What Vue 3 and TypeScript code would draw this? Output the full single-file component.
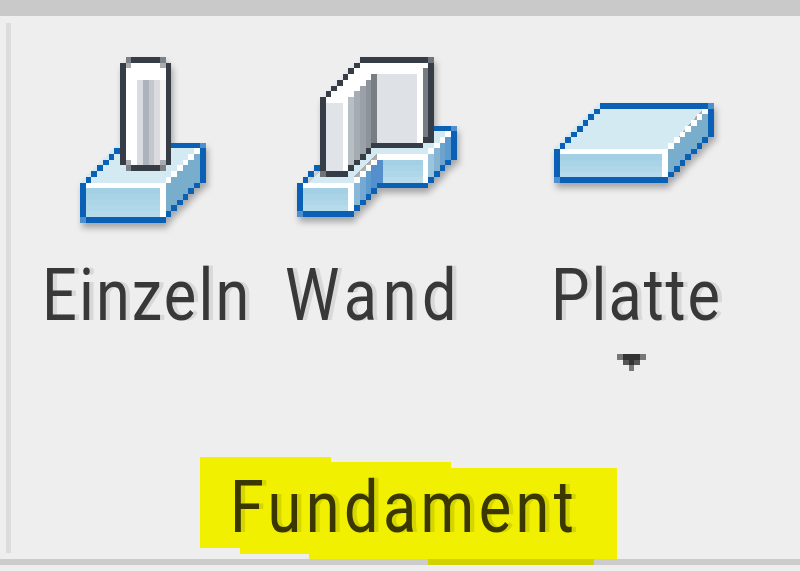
<script setup lang="ts">
interface Cell { x: number; y: number; w: number; h: number; fill: string }
interface Poly { points: string; fill: string }
interface Art { name: string; cols: number; rows: number; polys: Poly[]; cells: Cell[] }

const BLUE = '#0a60b5'
const CORNER = '#4f8fcb'
const DARK = '#373d46'
const TOP = '#d3eaf2'
const SIDE = '#78adcb'
const WHITE = '#ffffff'

const cell = (x: number, y: number, w: number, h: number, fill: string): Cell => ({ x, y, w, h, fill })

// staircase going up and to the right, one cell per step
function stairs(x: number, y: number, n: number, fill: string): Cell[] {
  return Array.from({ length: n }, (_, i) => cell(x + i, y - i, 1, 1, fill))
}

// front face of a slab, light blue getting paler towards the bottom
function front(x: number, y: number, w: number, h: number): Cell[] {
  return Array.from({ length: h }, (_, i) => {
    const t = h > 1 ? i / (h - 1) : 0
    const c = (a: number, b: number) => Math.round(a + (b - a) * t)
    return cell(x, y + i, w, 1, `rgb(${c(163, 182)},${c(208, 219)},${c(229, 235)})`)
  })
}

const einzeln: Art = {
  name: 'Einzeln',
  cols: 22,
  rows: 29,
  polys: [
    { points: '7,15 22,15 15,22 0,22', fill: TOP },
    { points: '15,22 21,16 21,22 15,28', fill: SIDE },
  ],
  cells: [
    ...front(1, 23, 13, 5),
    cell(1, 22, 14, 1, WHITE),
    cell(14, 22, 1, 6, WHITE),
    ...stairs(15, 21, 6, WHITE),
    cell(7, 15, 15, 1, BLUE),
    cell(21, 15, 1, 7, BLUE),
    cell(21, 15, 1, 1, CORNER),
    cell(0, 22, 1, 6, BLUE),
    cell(0, 28, 1, 1, CORNER),
    cell(1, 28, 14, 1, BLUE),
    ...stairs(1, 21, 6, BLUE),
    ...stairs(15, 27, 6, BLUE),
    // column
    cell(8, 1, 7, 18, WHITE),
    cell(10, 4, 1, 15, '#d8dbdf'),
    cell(11, 4, 1, 15, '#adb3ba'),
    cell(12, 4, 1, 15, '#c4c8cd'),
    cell(13, 4, 1, 15, '#d9dbde'),
    cell(14, 4, 1, 15, '#f3f3f4'),
    cell(9, 0, 5, 1, DARK),
    cell(9, 19, 5, 1, DARK),
    cell(7, 1, 1, 18, DARK),
    cell(15, 1, 1, 18, DARK),
    cell(8, 0, 1, 1, '#7c8187'),
    cell(14, 0, 1, 1, '#7c8187'),
    cell(8, 19, 1, 1, '#7c8187'),
    cell(14, 19, 1, 1, '#7c8187'),
    cell(8, 1, 1, 1, '#a8abb0'),
    cell(14, 1, 1, 1, '#a8abb0'),
    cell(8, 18, 1, 1, '#a8abb0'),
    cell(14, 18, 1, 1, '#a8abb0'),
  ],
}

const wand: Art = {
  name: 'Wand',
  cols: 28,
  rows: 28,
  polys: [
    { points: '2,22 10,14 27,13 23,17 14,17 9,22', fill: TOP },
    { points: '4,22 11,15 24,13 27,13 23,17 14,17 10,21 10,22', fill: TOP },
  ],
  cells: [
    // lower base, sloped side
    cell(10, 22, 1, 4, '#8ab8d6'),
    cell(11, 21, 1, 4, '#74a9d3'),
    cell(12, 20, 1, 4, '#5c9bd0'),
    cell(13, 19, 1, 4, '#5590cc'),
    cell(14, 18, 1, 4, '#5590cc'),
    cell(23, 17, 1, 4, '#9cc4dc'),
    cell(24, 16, 1, 4, '#85b3d2'),
    cell(25, 15, 1, 4, '#6da3cc'),
    cell(26, 14, 1, 4, '#5c9bd0'),
    ...front(1, 23, 8, 4),
    cell(1, 22, 9, 1, WHITE),
    cell(9, 22, 1, 5, WHITE),
    ...front(15, 18, 7, 4),
    cell(14, 17, 9, 1, WHITE),
    cell(22, 17, 1, 5, WHITE),
    ...stairs(10, 21, 4, WHITE),
    ...stairs(23, 16, 4, WHITE),
    // base outline
    cell(0, 22, 1, 5, BLUE),
    cell(0, 27, 1, 1, CORNER),
    cell(1, 27, 9, 1, BLUE),
    ...stairs(1, 21, 3, BLUE),
    ...stairs(10, 26, 4, BLUE),
    cell(14, 22, 9, 1, BLUE),
    ...stairs(23, 21, 4, BLUE),
    cell(27, 13, 1, 5, BLUE),
    cell(24, 12, 3, 1, BLUE),
    cell(27, 12, 1, 1, CORNER),
    // wall, white upper band
    cell(5, 7, 5, 1, WHITE),
    cell(6, 6, 5, 1, WHITE),
    cell(7, 5, 5, 1, WHITE),
    cell(8, 4, 5, 1, WHITE),
    cell(9, 3, 13, 1, WHITE),
    cell(10, 2, 12, 1, WHITE),
    cell(11, 1, 12, 1, WHITE),
    cell(5, 8, 3, 12, '#e0e3e7'),
    cell(8, 8, 1, 12, WHITE),
    cell(9, 7, 1, 12, '#b8bfc4'),
    cell(10, 6, 1, 12, '#a5adb3'),
    cell(11, 5, 1, 12, '#9aa1a8'),
    cell(12, 4, 1, 12, '#8d9399'),
    cell(13, 3, 1, 12, '#777d83'),
    cell(14, 3, 7, 12, '#dee1e5'),
    cell(21, 3, 1, 12, WHITE),
    cell(22, 2, 1, 12, '#767c83'),
    // wall outline
    cell(11, 0, 12, 1, DARK),
    cell(23, 0, 1, 1, '#6f7379'),
    cell(23, 1, 1, 14, DARK),
    cell(22, 14, 1, 1, DARK),
    cell(13, 15, 9, 1, DARK),
    ...stairs(5, 6, 6, DARK),
    cell(4, 7, 1, 13, DARK),
    cell(4, 20, 1, 1, '#6f7379'),
    cell(5, 20, 4, 1, DARK),
    ...stairs(9, 19, 4, DARK),
  ],
}

const platte: Art = {
  name: 'Platte',
  cols: 28,
  rows: 14,
  polys: [
    { points: '8,0 27,0 20,8 0,8', fill: TOP },
    { points: '20,8 27,1 27,6 20,13', fill: SIDE },
  ],
  cells: [
    ...front(1, 9, 18, 4),
    cell(1, 8, 19, 1, WHITE),
    cell(19, 8, 1, 5, WHITE),
    ...stairs(20, 7, 7, WHITE),
    cell(8, 0, 19, 1, BLUE),
    cell(27, 0, 1, 1, CORNER),
    cell(27, 1, 1, 5, BLUE),
    ...stairs(1, 7, 7, BLUE),
    cell(0, 8, 1, 5, BLUE),
    cell(0, 13, 1, 1, CORNER),
    cell(1, 13, 19, 1, BLUE),
    ...stairs(20, 12, 7, BLUE),
  ],
}

const tools: Art[] = [einzeln, wand, platte]
</script>

<template>
  <div class="ribbon">
    <div class="top-bar"></div>
    <div class="panel">
      <div class="separator"></div>
      <div class="content">
        <div class="tools">
          <div v-for="tool in tools" :key="tool.name" class="tool" :class="'tool-' + tool.name.toLowerCase()">
            <div class="icon-box">
              <svg
                class="icon"
                :viewBox="`0 0 ${tool.cols} ${tool.rows}`"
                :width="tool.cols * 5.71"
                :height="tool.rows * 5.71"
                shape-rendering="crispEdges"
              >
                <polygon v-for="(p, i) in tool.polys" :key="i" :points="p.points" :fill="p.fill" />
                <rect v-for="(c, i) in tool.cells" :key="i" :x="c.x" :y="c.y" :width="c.w" :height="c.h" :fill="c.fill" />
              </svg>
            </div>
            <span class="label">{{ tool.name }}</span>
            <svg v-if="tool.name === 'Platte'" class="caret" viewBox="0 0 5 3" width="29" height="17" shape-rendering="crispEdges">
              <rect x="0" y="0" width="5" height="1" fill="#777" />
              <rect x="1" y="0" width="3" height="1" fill="#333" />
              <rect x="1" y="1" width="3" height="1" fill="#555" />
              <rect x="2" y="1" width="1" height="1" fill="#333" />
              <rect x="2" y="2" width="1" height="1" fill="#777" />
            </svg>
          </div>
        </div>
        <div class="group-title"><span class="group-text">Fundament</span></div>
      </div>
    </div>
    <div class="bottom-line"><div class="marker-spill"></div></div>
  </div>
</template>

<style scoped>
.ribbon {
  width: 800px;
  height: 571px;
  display: flex;
  flex-direction: column;
  background: #eeeeee;
  overflow: hidden;
  font-family: Roboto, "Liberation Sans", sans-serif;
}
.top-bar {
  height: 16px;
  flex: none;
  background: #c9c9c9;
}
.panel {
  height: 543px;
  flex: none;
  display: flex;
}
.separator {
  width: 5px;
  margin: 7px 0 6px 6px;
  background: #dcdcdc;
}
.content {
  flex: 1;
  display: flex;
  flex-direction: column;
  justify-content: space-between;
}
.tools {
  display: flex;
  padding: 41px 0 0 34px;
}
.tool {
  display: flex;
  flex-direction: column;
  align-items: flex-start;
}
.tool-einzeln { width: 243px; }
.tool-wand { width: 266px; }
.tool-einzeln .icon-box { padding-left: 35px; }
.tool-wand .icon-box { padding-left: 9px; }
.tool-platte .icon-box { padding-top: 46px; }
.icon-box {
  height: 197px;
  box-sizing: border-box;
}
.icon {
  display: block;
  filter: blur(0.4px) drop-shadow(2px 5px 3px rgba(0, 0, 0, 0.3));
}
.label {
  font-size: 72px;
  line-height: 84px;
  letter-spacing: 2.5px;
  margin-left: -3px;
  color: #383838;
  text-shadow: 5px 0 0 rgba(0, 0, 0, 0.09);
  white-space: nowrap;
  transform: scaleX(0.85);
  transform-origin: left center;
}
.tool-wand .label { letter-spacing: 6.5px; }
.tool-platte .label { letter-spacing: 2.3px; }
.caret {
  display: block;
  margin: 16px 0 0 63px;
}
.group-title {
  margin-left: 189px;
  width: 417px;
  height: 102px;
  box-sizing: border-box;
  padding: 0 0 0 30px;
  background: #f0f000;
  clip-path: polygon(0 0, 131px 0, 131px 5px, 251px 5px, 251px 11px, 417px 11px, 417px 102px, 109px 102px, 109px 97px, 40px 97px, 40px 91px, 0 91px);
  font-size: 72px;
  line-height: 102px;
  color: #3a3700;
}
.group-text {
  display: inline-block;
  letter-spacing: 5.2px;
  text-shadow: 5px 0 0 rgba(120, 120, 0, 0.22);
  transform: scaleX(0.85);
  transform-origin: left center;
}
.bottom-line {
  height: 6px;
  flex: none;
  background: #cccccc;
}
.marker-spill {
  width: 166px;
  height: 100%;
  margin-left: 428px;
  background: #d2d200;
}
</style>
